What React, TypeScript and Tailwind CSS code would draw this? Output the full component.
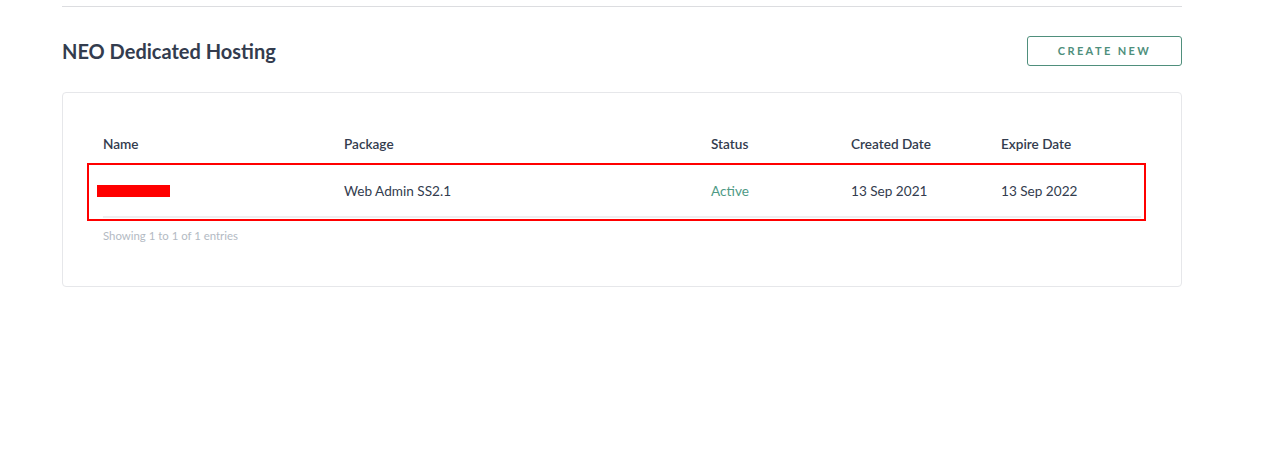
const columns = [
  { label: "Name", width: "w-[241px]" },
  { label: "Package", width: "w-[367px]" },
  { label: "Status", width: "w-[140px]" },
  { label: "Created Date", width: "w-[150px]" },
  { label: "Expire Date", width: "flex-1" },
];

export default function App() {
  return (
    <div className="min-h-screen bg-white font-['Lato','Noto_Sans',sans-serif] text-[#333c4e]">
      <div className="mx-[62px] w-[1120px] pt-[6px]">
        <div className="border-t border-[#dcdde0]" />

        <div className="mt-[29px] flex items-center justify-between">
          <h1 className="text-[20px] font-bold text-[#333c4e]">NEO Dedicated Hosting</h1>
          <button className="h-[30px] w-[155px] rounded-[3px] border border-[#4f8f7c] text-[11px] font-bold tracking-[2.4px] text-[#4f8f7c]">
            CREATE NEW
          </button>
        </div>

        <div className="mt-[26px] rounded-[4px] border border-[#e6e7ea] px-10 pt-[32px] pb-[42px]">
          <div className="relative">
            <div className="flex h-[38px] items-center pt-[1px] text-[13.6px] font-semibold">
              {columns.map((c) => (
                <div key={c.label} className={c.width}>
                  {c.label}
                </div>
              ))}
            </div>

            <div className="flex h-[55px] items-center border-b-2 border-[#eeeef0] pt-[3px] text-[13.6px]">
              <div className="w-[241px]">
                <div className="ml-[-6px] h-[12px] w-[73px] bg-[#ff0000]" />
              </div>
              <div className="w-[367px]">Web Admin SS2.1</div>
              <div className="w-[140px] text-[#4e9a85]">Active</div>
              <div className="w-[150px]">13 Sep 2021</div>
              <div className="flex-1">13 Sep 2022</div>
            </div>

            <div className="pointer-events-none absolute top-[38px] left-[-16px] right-[-5px] h-[58px] border-2 border-[#ff0000]" />

            <div className="mt-[9px] text-[11.4px] text-[#b3bac3]">Showing 1 to 1 of 1 entries</div>
          </div>
        </div>
      </div>
    </div>
  );
}
